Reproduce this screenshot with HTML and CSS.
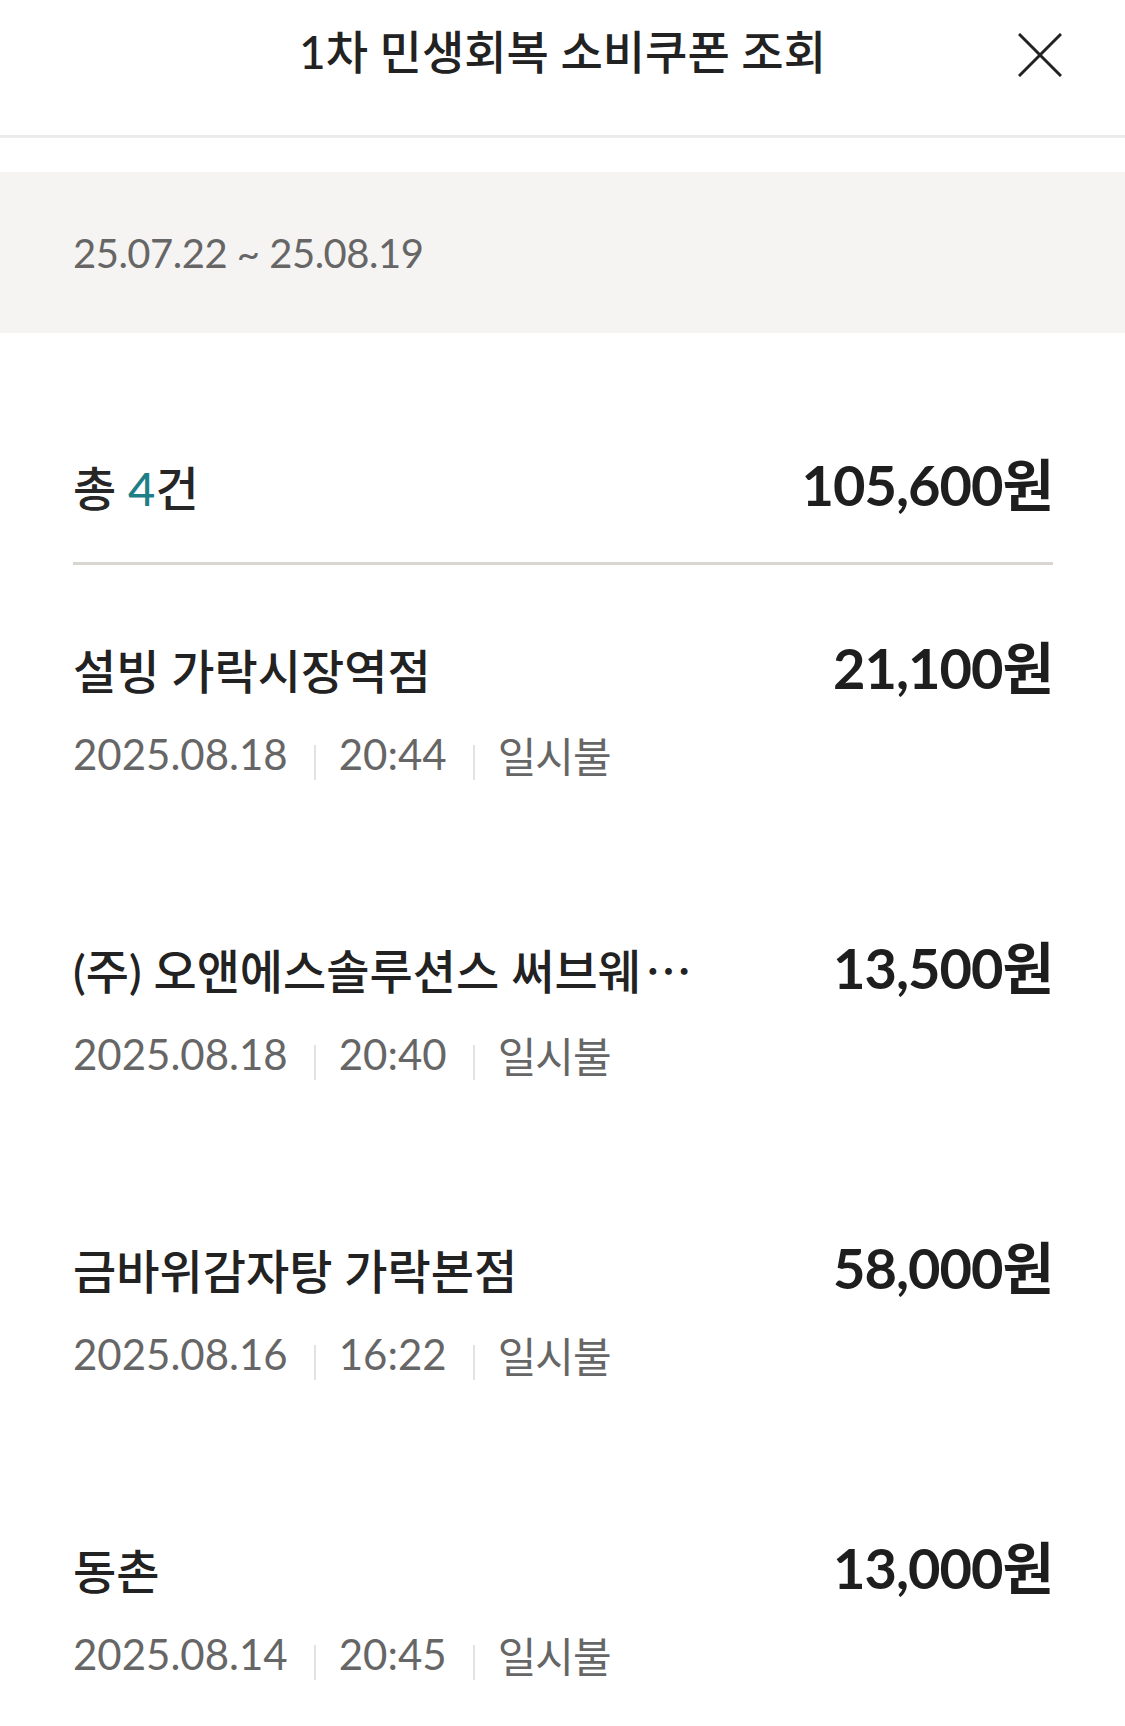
FILE: index.html
```html
<!DOCTYPE html>
<html lang="ko">

<head>
  <meta charset="utf-8">
  <meta name="viewport" content="width=device-width, initial-scale=1">
  <title>1차 민생회복 소비쿠폰 조회</title>
  <link rel="stylesheet" href="styles.css">
</head>

<body>
  <header class="top-bar">
    <h1 class="title">1차 민생회복 소비쿠폰 조회</h1>
    <button class="close-btn" type="button" aria-label="닫기">
      <svg width="44" height="44" viewBox="0 0 44 44">
        <path d="M1 1 L43 43 M43 1 L1 43" stroke="#222" stroke-width="3" fill="none"/>
      </svg>
    </button>
  </header>

  <div class="period">25.07.22 ~ 25.08.19</div>

  <div class="summary">
    <div class="summary-row">
      <span class="count">총 <em>4</em>건</span>
      <span class="total">105,600원</span>
    </div>
  </div>

  <ul class="history">
    <li class="item">
      <div class="item-top">
        <span class="shop">설빙 가락시장역점</span>
        <span class="amount">21,100원</span>
      </div>
      <div class="item-meta">
        <span>2025.08.18</span><i class="sep"></i><span>20:44</span><i class="sep"></i><span class="kind">일시불</span>
      </div>
    </li>
    <li class="item">
      <div class="item-top">
        <span class="shop">(주) 오앤에스솔루션스 써브웨<span class="more">⋯</span></span>
        <span class="amount">13,500원</span>
      </div>
      <div class="item-meta">
        <span>2025.08.18</span><i class="sep"></i><span>20:40</span><i class="sep"></i><span class="kind">일시불</span>
      </div>
    </li>
    <li class="item">
      <div class="item-top">
        <span class="shop">금바위감자탕 가락본점</span>
        <span class="amount">58,000원</span>
      </div>
      <div class="item-meta">
        <span>2025.08.16</span><i class="sep"></i><span>16:22</span><i class="sep"></i><span class="kind">일시불</span>
      </div>
    </li>
    <li class="item">
      <div class="item-top">
        <span class="shop">동촌</span>
        <span class="amount">13,000원</span>
      </div>
      <div class="item-meta">
        <span>2025.08.14</span><i class="sep"></i><span>20:45</span><i class="sep"></i><span class="kind">일시불</span>
      </div>
    </li>
  </ul>
</body>

</html>
```

FILE: styles.css
```css
body {
  margin: 0;
  background: #ffffff;
  color: #222222;
  font-family: Lato, "Noto Sans CJK KR", sans-serif;
}

/* header */
.top-bar {
  height: 135px;
  border-bottom: 3px solid #ebebeb;
  display: flex;
  justify-content: center;
  align-items: flex-start;
  position: relative;
}

.title {
  margin: 0;
  line-height: 104px;
  font-size: 46px;
  font-weight: 500;
  color: #222222;
}

.close-btn {
  position: absolute;
  top: 33px;
  right: 63px;
  width: 44px;
  height: 44px;
  padding: 0;
  border: none;
  background: none;
}

.close-btn svg {
  display: block;
}

/* period box */
.period {
  margin-top: 34px;
  height: 161px;
  background: #f5f4f2;
  padding-left: 73px;
  display: flex;
  align-items: center;
  font-size: 40px;
  letter-spacing: -0.5px;
  color: #666666;
}

/* total */
.summary {
  padding: 112px 72px 0 73px;
}

.summary-row {
  height: 80px;
  padding-bottom: 37px;
  border-bottom: 3px solid #d9d5d1;
  display: flex;
  justify-content: space-between;
  align-items: center;
}

.count {
  font-size: 47px;
  font-weight: 500;
  color: #262626;
}

.count em {
  font-style: normal;
  color: #1f7f86;
}

.total,
.amount {
  font-size: 56px;
  font-weight: 700;
  color: #1e1e1e;
  letter-spacing: -1px;
  margin-bottom: 7px;
}

/* list */
.history {
  list-style: none;
  margin: 0;
  padding: 0 72px 0 73px;
}

.item {
  height: 300px;
  padding-top: 73px;
  box-sizing: border-box;
}

.item-top {
  height: 60px;
  display: flex;
  justify-content: space-between;
  align-items: center;
}

.shop {
  font-size: 47px;
  font-weight: 500;
  color: #222222;
  max-width: 700px;
  white-space: nowrap;
  overflow: hidden;
  text-overflow: ellipsis;
}

.more {
  font-family: "Noto Sans CJK KR", sans-serif;
  margin-left: 4px;
}

.item-meta {
  margin-top: 31px;
  height: 50px;
  display: flex;
  align-items: center;
  font-size: 42px;
  color: #666666;
}

.kind {
  letter-spacing: -1px;
}

.sep {
  width: 2px;
  height: 35px;
  margin: 16px 23px 0 26px;
  background: #e2e2e2;
}
```
